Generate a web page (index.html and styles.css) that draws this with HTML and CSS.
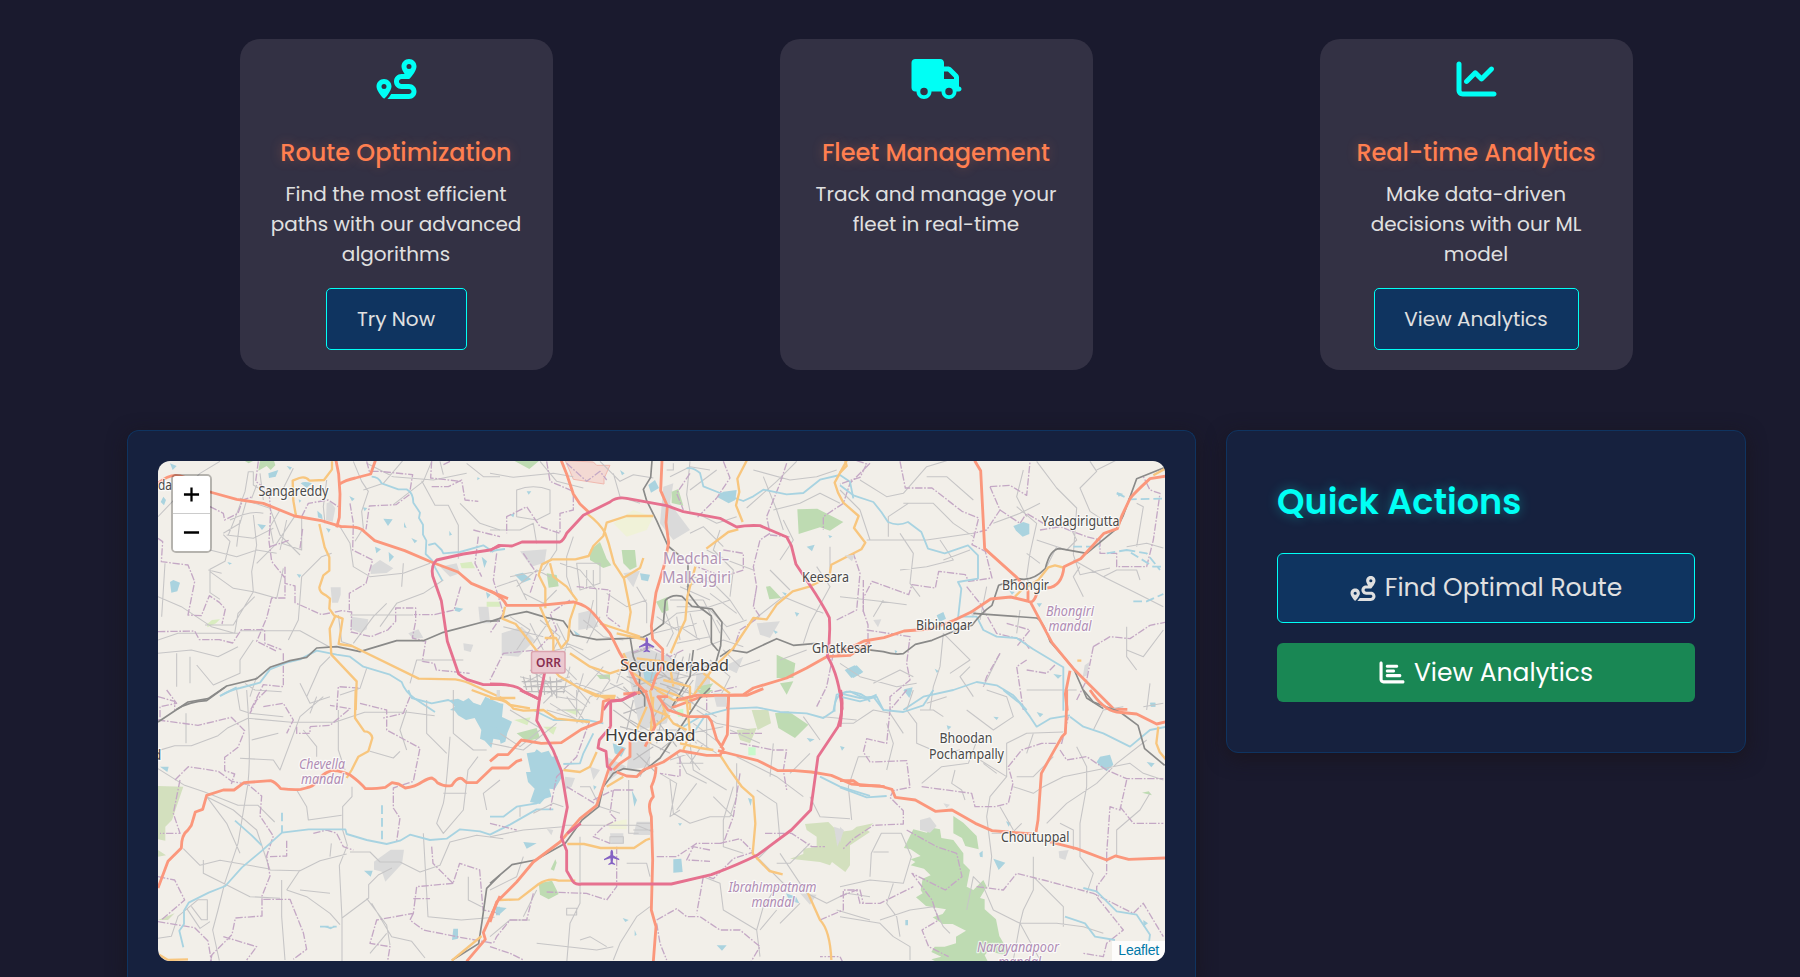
FILE: index.html
```html
<!DOCTYPE html>
<html lang="en">
<head>
<meta charset="utf-8">
<title>Route Optimization</title>
<link rel="stylesheet" href="styles.css">
</head>
<body>
<svg width="0" height="0" class="sprite">
  <symbol id="route" viewBox="0 0 512 512"><path d="M512 96c0 50.2-59.1 125.1-84.6 155c-3.8 4.4-9.4 6.1-14.5 5L320 256c-17.7 0-32 14.3-32 32s14.3 32 32 32l96 0c53 0 96 43 96 96s-43 96-96 96l-276.4 0c8.7-9.9 19.3-22.6 30-36.8c6.3-8.4 12.8-17.6 19-27.2L416 448c17.7 0 32-14.3 32-32s-14.3-32-32-32l-96 0c-53 0-96-43-96-96s43-96 96-96l39.8 0c-21-31.5-39.8-67.7-39.8-96c0-53 43-96 96-96s96 43 96 96zM117.1 489.1c-3.8 4.3-7.2 8.1-10.1 11.3l-1.8 2-.2-.2c-6 4.6-14.6 4-20-1.8C59.8 473 0 402.5 0 352c0-53 43-96 96-96s96 43 96 96c0 30-21.1 67-43.5 97.9c-10.7 14.7-21.7 28-30.8 38.5l-.6 .7zM128 352a32 32 0 1 0 -64 0 32 32 0 1 0 64 0zM416 128a32 32 0 1 0 0-64 32 32 0 1 0 0 64z"/></symbol>
  <symbol id="truck" viewBox="0 0 640 512"><path d="M48 0C21.5 0 0 21.5 0 48L0 368c0 26.5 21.5 48 48 48l16 0c0 53 43 96 96 96s96-43 96-96l128 0c0 53 43 96 96 96s96-43 96-96l32 0c17.7 0 32-14.3 32-32s-14.3-32-32-32l0-64 0-32 0-18.7c0-17-6.7-33.3-18.7-45.3L512 114.7c-12-12-28.3-18.7-45.3-18.7L416 96l0-48c0-26.5-21.5-48-48-48L48 0zM416 160l50.7 0L544 237.3l0 18.7-128 0 0-96zM112 416a48 48 0 1 1 96 0 48 48 0 1 1 -96 0zm368-48a48 48 0 1 1 0 96 48 48 0 1 1 0-96z"/></symbol>
  <symbol id="chart-line" viewBox="0 0 512 512"><path d="M64 64c0-17.7-14.3-32-32-32S0 46.3 0 64L0 400c0 44.2 35.8 80 80 80l400 0c17.7 0 32-14.3 32-32s-14.3-32-32-32L80 416c-8.8 0-16-7.2-16-16L64 64zm406.6 86.6c12.5-12.5 12.5-32.8 0-45.3s-32.8-12.5-45.3 0L320 210.7l-57.4-57.4c-12.5-12.5-32.8-12.5-45.3 0l-112 112c-12.5 12.5-12.5 32.8 0 45.3s32.8 12.5 45.3 0L240 221.3l57.4 57.4c12.5 12.5 32.8 12.5 45.3 0l128-128z"/></symbol>
  <symbol id="chart-bar" viewBox="0 0 512 512"><path d="M32 32c17.7 0 32 14.3 32 32l0 336c0 8.8 7.2 16 16 16l400 0c17.7 0 32 14.3 32 32s-14.3 32-32 32L80 480c-44.2 0-80-35.8-80-80L0 64C0 46.3 14.3 32 32 32zm96 96c0-17.7 14.3-32 32-32l192 0c17.7 0 32 14.3 32 32s-14.3 32-32 32l-192 0c-17.7 0-32-14.3-32-32zm32 64l128 0c17.7 0 32 14.3 32 32s-14.3 32-32 32l-128 0c-17.7 0-32-14.3-32-32s14.3-32 32-32zm0 96l256 0c17.7 0 32 14.3 32 32s-14.3 32-32 32l-256 0c-17.7 0-32-14.3-32-32s14.3-32 32-32z"/></symbol>
  <symbol id="plane" viewBox="0 0 46 46"><path d="M23 0q4 3 4 8v9l19 11v4l-19-6-1 12 7 5v3l-10-3-10 3v-3l7-5-1-12-19 6v-4l19-11V8q0-5 4-8z"/></symbol>
</svg>

<main class="container">
  <section class="features">
    <article class="feature">
      <svg class="feature-icon"><use href="#route"/></svg>
      <h5 class="feature-title">Route Optimization</h5>
      <p class="feature-text">Find the most efficient<br>paths with our advanced<br>algorithms</p>
      <a class="btn btn-try">Try Now</a>
    </article>
    <article class="feature">
      <svg class="feature-icon wide"><use href="#truck"/></svg>
      <h5 class="feature-title">Fleet Management</h5>
      <p class="feature-text">Track and manage your<br>fleet in real-time</p>
    </article>
    <article class="feature">
      <svg class="feature-icon"><use href="#chart-line"/></svg>
      <h5 class="feature-title">Real-time Analytics</h5>
      <p class="feature-text">Make data-driven<br>decisions with our ML<br>model</p>
      <a class="btn btn-view">View Analytics</a>
    </article>
  </section>

  <section class="dashboard">
    <div class="panel map-panel">
      <div class="map">
        <svg class="map-canvas" viewBox="158 461 1007 500">
          <!-- north-west -->
          <g transform="translate(120 420) scale(.33333)">
            <path class="green" d="M420 122l-5 30 25-14 12 12 14-14-4-14zM373 122h28l-15 8z"/>
            <path class="urban" d="M620 250l12-5 14 20-8 40-20-4zM632 502h30v22l-8 24h-18zM695 590l50 8-5 30-20 10-28-12zM752 440l28-20 40 25-20 14-48 3zM960 440l50-10 10 30-30 10zM865 640l30-12 15 25-30 4zM1030 670l30 4-8 22-20-5zM1075 560h30l5 50h-30z"/>
            <path class="park" d="M262 612l14-12 24-2-12 12-26 12zM1100 545h40v15h-40zM1020 430l35-5 10 20h-40z"/>
            <path class="water" d="M150 130l20 8-12 12zM445 160l30-10-8 20-20 4zM500 138l16 4-6 8zM542 190q10-8 34 0l-16 14zM130 230l8 10-6 16-10-10zM412 312l26 4-12 14zM150 486l10-6 20 8-8 26-18 4zM530 462l14 2-6 10zM322 426l14 4-8 4zM592 272l14 12 2 14-14-6zM618 324l14 4-6 10zM790 296l28 2-14 20zM852 306l8 18-8-2zM688 228l16 8-8 8zM728 262l14 2-8 10zM874 354l18 8-8 8zM765 380l18 8-14 12zM806 396l16 14-14 16zM988 332l8 12-8 3zM1006 562l24 4-12 10-14-4zM1072 172l8 3-8 6zM536 238l8 4-6 6zM1085 410l16 14-8 20zM1098 516l14 8-10 12z"/>
            <path class="minor" d="M114 290L200 200 240 160 300 124M200 200L160 230M385 155h15v40l35 20 55-10 30-60M385 155l-10 60-30 80-20 50M410 195l-15 40M330 300q60-30 100-20M310 344l20 20-15 60-45 24v70l30 20M270 390l80 20 60-20 60 10M380 240l-20 70-50 30M360 235l90 30 30 80 60 60M410 430l60-60 60-90M400 515l-60 100-85 0M270 455l70 50 60 10-5-60 15-80-10-90M400 515l70 20 20-90M305 460l-40-10M114 530l70 30 90 60 70 20 10-60 50-50M125 590l10-160M360 632h180l90 50M545 470l60-60 30-10M545 470l-10 130-30 60M700 124l25 60 20 30-20 60 5 50-25 40M620 180l-10 80 5 50M660 320l30 50 10 70 50 30 100-10 80-30M935 124l-25 60-90 70M905 182l40 74 40 0 30 60v100M730 210l60-20 60-70M740 130l80 40 120 10 100-20M1020 250l60 60 60 20M780 620l50-70 80-30 60-40M850 430l-5 70M690 585h190M655 585l10 80 30 10M700 670l60-80 40-40M114 700l100-10 80 20 60-30M114 660l60-20 120 0 60 0M230 735l50 60 80-35 0-40 40-60M170 800v-100M210 790v-80M375 790l30 20 80 5M410 770l-20 60M540 790l30 60 60-20M560 830l40-90 30-30M740 745l-20 60-60 20M870 790l20-70 140 0M480 270l-30 50 10 50M500 300l-20 90M545 290v100l-60-20M320 345l80 10 60-30M360 300l-10 80M430 240l-10-80M1040 130l50 40 50 0M960 124l10 40"/>
            <path class="boundary" d="M415 124l-8 60 40 30 5 60-5 90 8 60 40 50 0 60-40 0-15 60-30 70 60 30M270 260l40 20 4 20 40-20 14-40 30-10M450 380l60-20M545 290l20-40 60-10 30 20M540 385l8-60M114 355l14 10-4 60 80 10 20 50-20 100 40 2 24-60 30 20 18 20-10 45M114 635l110-2 14 26 60 0 40 10 26-40 70 0 0 40 50 20M495 440v50l30 8v50l80 36 60-12 30 4-2 60 60 14 50-20 24-26v-40h60v40l-10 50 40 10-10 60 36 6 6 20 100 10M690 250l10 60-2 80 60 30-20 70-50 30 0 50M740 124l8 30 30 0 100 10-10 60-40 30-80 4-10 70M935 124l-3 50 90 10M935 200l50 0 40-20 10 60 40 4M1075 350l-10 80 20 40M1022 500l-20 70-60 14-60 0M490 700v100l-60-6-10 20-30 60M650 870l5-70 60 4M114 830l50 14 0 26M1060 330l80 20M990 124l-20 10"/>
            <path class="river" d="M755 170q20 0 30 20l50 18h25q20 10 20 40l20 30-3 16 12 20v30l10 18-2 40 20 20 8 20 22 40M925 375l20-5 20 20 5 10 50-4 70-20 30 20M300 828q30-18 60-24l60-16 30-40 50-20 40-10 50-26 60 12 40 6 40 30 80 24 35 22q10 30 40 50l60 40"/>
            <path class="rail" d="M170 868q40-24 90-26l60-44 90-22 40-34 60-20 50-10 30-28 60-4 70 15 50-15 60-18h80l60-25 130-34 40 0"/>
            <path class="secondary" d="M636 124v24l-24 32-44 2q-10-14-30-8l-20 8 2 60 8 46M598 312l16 70 14 30v40l-18 14-12 36q0 16 20 24l12 10-2 30 14 20 26 10-12 76 40 6 200 98 110 2q30 4 60 20l80 36h40M645 590l-16 36 5 78 76 80-3 86"/>
            <path class="trunk" d="M114 190q40-36 80-18l76 44 80 22 80 12 94 38 80 14 60 18q60-2 70 16l30 26 90 30 80 34 80 30 40 34 110 46M648 122l8 40 4 60-2 70-8 30M656 194q20-14 50-20l46-12 14-40"/>
            <path class="motorway" d="M1140 378l-30 12-80 12-80 18q-18 16-12 48l26 74 18 122 34 98q10 8 24 16l50 16h50"/>
          </g>
          <!-- north centre -->
          <g transform="translate(490 420) scale(.33333)">
            <path class="urban" d="M90 394l80-6-6 40-40 12zM35 640l60-20 40 40-50 50-50-4zM265 580l40-10 20 50-60 10zM520 200l30-10-10 60 60 80-50 30-40-50zM800 610l70-6-30 50-30-10zM700 740l60-30-20 50zM620 760l40 0 0 50-50 20zM400 460l50-8-20 50zM400 700l60-20 100 40 10 90-60 60h-70z"/>
            <path class="farm" d="M370 310l60-40 60 20-20 40-60 20z"/>
            <path class="green" d="M72 122h76l-30 25zM545 215l20-8 15 50-35-8zM922 268l60-2 78 40-40 26-30-10-64 20zM300 390l30-24 20 50 14 20-24 8-40-24zM395 390l40 0 5 50-20 10-20-20zM828 500l12-2 34 36-36 4zM498 545l34-14 4 40-20 8zM170 460l30 5 6 34-30 4zM860 704l56 26-6 44-50 0zM870 790l40-6-20 40zM620 800l50-10-20 30zM320 765l40-2v14h-30z"/>
            <path class="military" d="M226 122l84 4 10 10 40 0-18 40 0 16-92-14z"/>
            <path class="water" d="M475 195l20-15 12 24-24 14zM680 230l20-15 40-5-4 30-20 10zM74 464l24-6 26 20-26 10zM950 380l24-6-8 20zM110 214h14l-8 10zM60 284l14-4-4 12zM390 150l14 10-8 6zM450 460l30 4-6 20-20-4zM914 576l14 4-8 10zM1064 750l30-14 20 24-30 14zM850 630l14 6-8 6zM460 755l40-10-4 36-30 10zM0 845l20 10 10 30H0zM250 630l20 14-10 6zM1015 345l12 4-8 6zM876 516l14 4-4 8z"/>
            <path class="minor" d="M0 160l70 12 120-12 60 10M80 210q50-20 100 0v70l-40 20-60-10zM0 330h90l40-20 10 60M150 124l50 60 80 20M370 160l20 70 60 20M330 124l60 60 40-20 60 10M530 150h20v-20M540 170l60-30 60 10M600 210l80-60M600 124l-10 100 10 50M620 280l60 30 60-20M790 150l110 30 80-10 60-20M820 170l40 100 20 60M850 270l80-20 60-30 60 30M920 124l-60 60-90 80M940 480l80-20 0-80M980 440l40 60-60 110-20 60M790 600l90-70 120 50M880 300l30 60-40 60M870 720l80-30M840 450l60 60M700 380l-60-60-40 20M690 330l-20 60 60 60-10 80M650 390l60 30 80 30M200 330v60l-40 60-100 20M250 350l-20 60 0 60 20 60M210 430l60 20 50 60v80M260 430h70v60l-60 20zM290 450v50M310 450v50M350 520l60 40 60-20M80 500l60-50 40 20M20 500l60-20 30 60M100 520l60 30 40-40M60 590l60 40-40 60M150 600l60 50-20 40M120 610l40 80M180 600l-50 70M200 610l30 60 50 20M40 620l120 30M160 700l80-20 60 40 60-30M240 640l-20 70M280 600l60 50 60 10M310 540l-20 90M330 590l-40 80M440 500l30 50 0 60M500 590l60 40 60-20M510 620l50-40 80-10M520 560l30 80-20 40M490 640l80-20 60 40M560 590l10 70M600 580l20 70M630 570l90-30 40 60M650 560l60 60 60-20M640 540l50 100M660 520l80 60M680 600l40 60M620 690l80-30 60 20M530 700l40 50 60-20M520 750l80 20 60-40M540 780l100-20M560 790l60 40M660 720l60 50-30 60M700 690l50 50 60-20M120 750l60 40 60-20M90 770l80 20 30 40 60 10M100 790l80-40M110 800l120-20M170 820l90-30 80 30M240 740l-20 80M280 760l-20 70M300 740l60 40-40 60M200 720l60 60M340 740l-60 70M360 790l60 30M380 760l60 40M400 730l-20 60M540 540h100M560 560h90M610 470l60 20 50 50M570 500l90 40M590 500l70-30M240 780l60 70M210 800l80 60M300 830l100-40M640 600l30 80M560 670l100-20"/>
            <path class="minor dark" d="M100 770l10 40M120 765l6 50M140 760l6 60M160 765l4 60M180 770l6 60M200 775v60M95 785h120M100 800h130M105 815h120M500 760l80 30M510 790l90 30M430 700l60-20M420 730l90-10M470 790l60 40M560 700l-20 50M580 710l-20 70M600 700l-10 60M450 830l80 20M410 770l90 20M430 800l90-30M500 700l-20 90M400 800l60 60M530 800l80 50M480 720l60 60M610 780l-60 80"/>
            <path class="boundary" d="M170 124l10 60 70 30 0 56-40 10 0 60-60-20-40-60-60 30 0 50M230 130l60 54 40-30 20 26M890 130l-20 60-40 100 10 50-30 20-20 80 10 60-10 60M1140 130l-60 60-20 60-60 40 0 40M700 124l20 50-40 60-60 60M600 160l-40 60 20 50M840 345l60 6M700 390l60 10 0 50-60 20-80-30M800 500l-10 60 20 30-60 40-20 60M580 690l-40 20-60-30-60 20M260 500l100 10-10 80 40 30M20 400l-10 80 30 100-40 60M100 400l40 60-20 60M1040 600l60-30 10-110-20-60M1030 700l-20 100-30 60M240 540l-60 40 20 50-60 60-100 10-40 80M650 870v-50l90-20M1120 480v100"/>
            <path class="river" d="M590 145q20-4 40 14l10 40 50 20 30 10 40 14 30-14 30-20 70 14 50-4 50-40 60-14 30 20 10 50M0 395q20-6 45-8M1140 845q-20-30-70-30-40 10-36 60"/>
            <path class="rail" d="M0 605l60-20 50-10 60 18 50 10 30 42 70 14 90-4 50-4 20-10 40-30 6-70q20-20 50-12l30 30 60 8 30 40-4 70-14 50-30 14M486 122l-4 50-22 36 10 34 30 60 34 76 60 50v90l30 40 40 30v80l20 24M690 710l30-20 50 8 90-42 50 20 70-6M420 650l10 60 20 50-4 60 20 50M610 690l-10 80-60 100"/>
            <path class="secondary" d="M770 122l-28 54 6 40-10 40 20 50M745 328l-30 8-66 50M1070 122l-36 66 10 30 16 30 46 40-14 36 34 44-12 20-90 46-6 36-60 30-50 14-48 40-30 44-40-4-60 90-60 60-80 110M290 280q40 30 56 60l10 30 16 60 30 46 20 100-10 60M490 288l-80 0-60 20-10 40-30 30-14 30-40 10-70 0-30 15-10 32 20 40v60M180 430l10 40 40 30 30 40-20 60-6 60-20 24-16-30-34 0M400 474l50-30 10-30M616 440l-24 90-6 70-14 30-30 70M380 640l90 20M330 610l60 20 60 20M45 560l-8 36 40 16 60 76 70 80 50 30 60 30h60M150 560l40 90 0 50M240 700l60 40 60 20 60-20M440 715l80 10 60 20M400 700l30 60 60 40 80 30M540 740l10 60M640 760l80 60M600 870v-70l-80-20M0 835q40-5 60 20l60 10"/>
            <path class="trunk" d="M214 122l16 40 20 60 20 30 28 26M516 122l-4 90 20 46-4 50 8 60-14 70-24 80-14 100 4 40 30 30 0 50-20 30-20 60M0 512q40 20 50 44l100 0 100-10q40 10 60 34l50 60 30 60 30 50 20 40 60 60M1140 666l-60 40-70 4-60 34-60 30-100 30-30 20-120 4-80 30-40 14M716 826l-4 44M400 822l70-6 10 40"/>
            <path class="motorway" d="M0 392l26-16 40 2 30-12h114q10-4 20-26l50-54 80-40q20-16 50-11l120 22 50 18 110 20 50 26q30-6 70-4l80 34 14 26 14 56 40 60q40 60 60 100 4 60-6 116 36 60 44 160M0 792q80 0 100 22l48 24 16-80M340 870l20-28 36-2 40-22"/>
          </g>
          <!-- north-east -->
          <g transform="translate(840 420) scale(.33333)">
            <path class="water" d="M520 318l30-12 18 6v30l-20 8-20-18zM290 586l20-10 8 20-20 10zM830 216l20 6-14 8zM20 750l30-14 20 20-30 18zM590 550h16l-8 12zM640 762l26 4-12 10zM192 808l26-6-8 30zM284 746l14 8-8 4zM932 848h14v12h-12zM164 690l8 4-6 8zM508 512l16 4-8 8z"/>
            <path class="urban" d="M100 600l24-2-10 24zM14 406h30l-8 18zM734 736l14-10-6 40-14 6zM390 570l20 4-12 20z"/>
            <path class="minor" d="M60 180l80 50 50-10 70-80 60-18M190 250l90 0 60 60 60 40M145 350v-60l60-40M0 210l60 60 30 90M80 360h180l140-20M300 360l40 60-80 20-80 10M310 420l80-30M260 170h60l80 70M180 340l40 60-10 90 30 40M0 530l120 14 80 10M130 540l-30 50M590 124l60 80 60 60-10 140 20 60 90-20M550 150l-20 80 30 60M530 260l60 50-20 90-10 70 10 30M460 310l80-30 60-30M590 360l90 30 30-30-30-60M750 124l20 30-50 50 30 70 60 40M770 150l60-30M860 380l60-10 50 14M890 250l20 10-20 120M700 420l90 50 100 50 80 40M720 440l-20 30 30 60M790 470l40-20 60 0 10 30M310 640l-10 100-20 60-10 70M310 640l80 80-60 40M390 740l-30 30 40 60M480 700l-50 100M860 620l0 90 30 40M860 690l50 20 60-80M930 790l-10 80M560 810h90l60 0M0 730l60 40 110 30 60-10M100 790l80-40 40 20M440 500l-20 100M540 570l-10 70M650 380l-30 60M600 430l-40-30"/>
            <path class="boundary" d="M50 122l30 10-20 40-60 20M180 124l16 80 80 0 90 70 50 20-20 80 40 20 20 80-70 10-10-20-80-10-10 50-70-10-10 30-110-40-26 50 0 40 14 40v70M450 200l60-4 50 30 10-100M450 200l30 70-40 60-40 10M480 270l60 40 20-30 50 30M600 330l60-10 80 30 40 10v40l50 0 0 40 90 0 20-80 20-140-30-10-20-40M380 500l40 50 50 90 80 20 20 30M500 610l70 20-40 50M80 630l130 20-10 80 10 50-60 50 0 40M480 700l-40 70-10 30M560 720l-30 20 20 130M560 750l60 10 30-30M760 680l-20 100-30 60M760 680l50-30 60 6 60-40 50-10"/>
            <path class="river" d="M0 196l40 30 60 20 24 30 20 30q30 14 60 0l40 30 20 50 50 14 70-24 30 30 0 70-60 10 10 20-10 90M360 590h50l20 40 40 20 60 4 50 34 60 36 30 18v130M0 820l60 14 40-4 30 40M190 870l60-40 90-20 70-24 60 10 50 30 40 44"/>
            <path class="river dashes" d="M700 380l80 0M800 400l60-10 80 50 30 0M880 544h40l50-22M830 220l40 18 100-2M860 390l60 10 40 50"/>
            <path class="rail" d="M980 140l-90 36-40 110-20 40-90 74-80-14q-30 0-44 60-40 40-80 30l-60 20-20 60q-30 20-60 60l-60 20-60 25-50 12-36 28q-30 4-60-6l-80-10M400 580l190 14q20 10 40 70l70 80 40 90 50 32"/>
            <path class="secondary" d="M940 166l40-22M0 158l20-20-4-16M525 530l20-20 50-30 30-38 20-6 30 8M712 722h12"/>
            <path class="trunk" d="M404 122l18 30 12 234 96 86 34 40v30M980 168l-50 8q-50 46-60 60l-24 50-14 40-40 14-70 76-50 24q-6 60-50 64M592 515q-10 40-30 28l-50-12-60 6-60 40-50 24-70 26-80 6-60 20-60 10-80 40M572 548l64 120 66 80 90 90 30 30h40M690 752l-14 70 6 50"/>
          </g>
          <!-- south-west -->
          <g transform="translate(120 690) scale(.33333)">
            <path class="farmgreen" d="M114 288l76 2-34 100-20 20 0 42-22-4zM114 480l24 16-24 4zM114 690l50-20-20 20z"/>
            <path class="urban" d="M762 515l50-36h40l-6 42-50 54-10-30-24-6zM1130 0h10v20h-10z"/>
            <path class="water" d="M120 230h26l-4 16zM990 30l24-4 16 8 16-10 14 14 22 8 14-26 44 20v110l-20-4-6 28-20-22-14-6 4-26-20-36-26 6-24-14-10-14-14-2 14-10zM732 542h26l-6 18zM612 710h34l-14 8zM1000 716l14 0v30l-18 4zM1128 650l12 0v26l-12 0z"/>
            <path class="minor" d="M114 182l50-15h50l80-30 30-24 60-28 130 12h130l90-30h130l80 10M198 70v90M380 0q14 180 4 280l-30 180-40 120-20 80-16 60 20 92M350 0l10 60 30 10 100 10M395 150l80-20M360 205l100 5 20 30 60-160 70-60M550 120l40 50 0 30M570 70l20-50M655 60v120l20 60M114 236l80 50 60 20 100 40 60 0 50 50M260 320l80 40 70 60 40 120 90 2 60-30 80-20M260 320l60 80 40 90M190 476l50 50 60-15 145 25M250 510l0 40 60 30 80 40 90 5M530 300l30 50 5 40 100-14M696 290v30l-28 30v70l14 46-24 60 8 160v130M666 684l80-60v-40l30-30 40-20M690 486h60l30 30 60 0 60 30 60-20 30-70 80-20 80 10M740 625l60 80 10 60M755 640l60 100 60 14 40 50M500 600l60 20 70 50 30 34M500 600l40-60M540 600l90 10M485 570l0 110 10 130M990 140q-10 150-20 200l-20 60 20 30 60-70 14-120 30-40M860 60l-20 60 20 60M920 30l0 100 60 60M1000 0v130l60 50 40 0M970 310h70M1140 270l-50 40 10 50M910 430l14 250 100 10 100-8M1045 560v70l40 20M800 730l-50 60M750 184l70 20 20-20M114 745l40-6 20-60 60-50 28 0 0 60-18 0-30-40M630 500l4-40M200 655l40 60 30-20"/>
            <path class="boundary" d="M140 0l30 40-50 10 0 40M114 90l120 16 100-24 40 40-20 50-40 30 0 40 30 10-10 30M165 270l40-40 90 14 40 30 50 10 40 34-5 60 40 60-20 60 10 60-24 60v60l-80 6-10 50-60 60-16 68M440 0l-30 30-20 40M430 50l60-10 30 50-20 40M530 110v20h40v-20M570 110l60-4 60-50-60-10M720 40l80 20 0 60 100 54-20 100-60 20 0 60 20 30-10 70M870 20l-20 50-60 14M450 500l50-2 0-50M580 430l40-10 30 10 20 40 30 10M180 270l-20 100 20 60-60 0M114 560l50 10 30 60-70 60M114 695l110 18 40 40 10 60M310 740l100 30-30 40M430 628l80 0 40 100 10 50-40 30M935 470l4 50 60 60 20-60 60 20 10 120 50 10M1000 580l-110 10-10 80-110 20-20 70 60 10-10 60M880 670l-10 20 40 30 100 20 110 20M880 626h50"/>
            <path class="river" d="M190 772l-12-50 14-20v-40l14-24 60-30 50-20 50-56 60-50 60-54 80-10h110l4 14 60 18 60 12 40-10 30-18 60 16 50-4 40-28 60 6 30 10 60-30 80-46h50M345 392l50 44 30 30M300 18l50-26M865 0l10 24 60 16 50-10 20 10"/>
            <path class="river dashes" d="M486 368v60M786 346v110M600 710h50"/>
            <path class="rail" d="M114 96l90-60 60-10 50-34M1140 555l-40 40-14 100-10 66-80 50"/>
            <path class="secondary" d="M707 0l-2 84 28 40q20 0 24 20l-12 40-30 16-20 40-15 24M114 792l30 18 60-2M1055 0l70 26h20M995 812l90-74"/>
            <path class="trunk" d="M114 594l30-80 40-40q0-40 20-54l10-14 12-40 22-8 12-42 50-16h32l30-22 80-6q14 4 30 24 40 4 60 2 30-6 40-14 20-30 50-42 30-2 60 14 30 22 44 40 40 0 60-4l20-14 20 4 20 12q30-4 50-18 20-12 30-12 12 6 16 14 24 14 44 8 16-26 30-20l14 12h30l46-44h50l24-20 16-5M1040 814l56-66-6-20 50-110"/>
          </g>
          <!-- south centre -->
          <g transform="translate(490 690) scale(.33333)">
            <path class="farmgreen" d="M785 60h50l8 40-40 20zM740 120l60-6-20 46-30-10zM945 402l70-6 30 30 80-10 15 10-60 40 0 60-14 20-40-30-6 10-30-10-90-10 40-14 0-16 40-6 0-30-30-20z"/>
            <path class="green" d="M855 70l40-6 60 40-40 40-50-30zM146 580l40-8 20 40-30 16-26-14zM182 538l14-30 4 10-8 24zM80 130l60-16 10 30-40 10zM620 0h50l-30 20z"/>
            <path class="farm" d="M350 400l60-12v30l-50-2z"/>
            <path class="parkbright" d="M775 172h22v24h-22zM560 60l20-4v24h-16z"/>
            <path class="park" d="M72 90l50-8-10 24zM160 110l40 0-10 24zM220 60l50-4-10 20z"/>
            <path class="urban" d="M225 260l30 4-10 26-20 10zM300 230l30 10-20 30zM440 395l40 0v40h-50zM170 416l20 4-6 16zM1032 410l30 10-20 50zM360 430h40v30h-36zM420 150h60v80l-70 10zM350 200l60 30-50 40zM930 610l50 4-20 30zM670 10h40v40h-30zM430 20l60-20 60 30-20 70-80 20z"/>
            <path class="water" d="M0 35l40 6-4 40 30 14-14 34-6 26-14 6-10-46-22-6zM110 190l24-4 6-8 14 10 22-6 10 18 16-2 16 60-24 40-16-2 6 24-20 6-14 16-30-6 14-40-20-20-6-30 14 0zM550 508l24-2 4 40-28 2zM100 456l40 4-30 16zM310 286l10 4-8 10zM368 160l40 14-14 26-20-10zM425 300l16 30-8 20zM950 144l24 4-14 8zM774 324l12 4-4 20zM564 400h12l-6 8zM20 650l30 4-20 18-14-4zM398 684l18 6-10 6zM680 766h30l-14 16zM888 610l30 10 10 20-30-8zM434 720l6 14-6 4z"/>
            <path class="minor" d="M0 440l100-20 120-10M270 290h30l30 60 60 20M220 406h220l50 20M360 440h40v20h-40zM416 270v160h30M270 440l0 200-30 60-10 120M0 600l80-40 20-60M100 680l40-80M230 655h30v20h-30zM140 760l180 20 50-10M270 750l30-10 50 30M480 650l-40 30-50 80-20 50M510 250l50 30-20 100 30-20M540 270l10 100 50 30 60-20 60 0 20-60 0-100M600 160l10 80 100 60M640 160l-40 60M560 190l30 60 60 30M620 280l-60 80M730 290l-30 100 0 80 60 20M800 300l60 40 10 110M740 200l120 60 80 60M850 160l-10 100M640 560l50 20 10 80 100 60 10 80M640 560l-80 20M730 380l-60-60M860 450l-60 60M870 490l80 120 60 30 60-30 70 10M800 500l100 100M1040 660l100 30M860 660l-50 60M860 590l-40 60-20 70M930 640l-60 60M960 320l30 60 90 6M1085 390l-10-100 30-90 35 0M1000 80l100 10M990 150l-50-70M900 250l60-60M620 60l60 40 100 20M610 100l80 60M650 80l0 100M600 130l100-20M720 120l90 40M590 30l90 50M560 100l60 60M30 130l60 40 60-50M0 160l100 20 100-80M60 60l100 60M0 740l60-50 60 0M130 370l60-30 30 10M90 380v-30M410 520h60l10 40M440 400h40M430 420h60M860 520l40 0 60-60M500 120l60 0M180 40l100 60M200 60l80 0M230 20l60 80M170 60l100 30M260 0v80M300 20l-40 80M200 0l-40 40M580 180l50 60M560 220l80 0M540 210l60-20M620 150l60 40M480 200l-30 60"/>
            <path class="minor dark" d="M380 20l60 50M400 70l60-20M370 60l70 50M390 110l80 20M420 90l70 40M430 30l-20 90M500 90l60 80M500 20l80 60M520 60l-20 100M540 0l-60 100M510 180l50-40M480 160l60 30M440 190l60 60M430 210l60-40"/>
            <path class="boundary" d="M300 90l-40 110-60 60-20 100M370 300l-10 70 20 20-40 20-30 30 50 20M230 290l100 60M430 300l-60 0-60 30M750 160l100 20 40 0-10 60 10 60M750 250l-20 130-30 80-80 0-60 40-60 0M825 430l80 0 60 40 40 0M720 130h100M570 200v60l-60-10M380 470v120l-30 40-60-20-120-4M130 610l-20 80-50 0-40 50-10 20M500 690l60-34 30 24 40 0 60 40 60 0 60 50-30 50M640 560l-20 110M690 460l60-14 40 40-60 20-60 60-30-10M660 480l-50-10-20 40 70 4M500 700l10 60 20 50M0 770l60 20 40 20M990 690l70-30 0-60 50 0 10 40M1060 820l-10-20-60 0M0 400l80 20"/>
            <path class="river" d="M0 380l40 0 40-30 60-10 40-30M310 130l-30 60-10 30-50 2M130 60l60 30 100 0 50 10M580 110l50-30 90-24 80-4 70 14 80 4 50 14 30-20 10-50 40-10 50 24 30-14M990 260l60 30 90 28M610 130l40-60"/>
            <path class="rail" d="M0 580l66-56 70-14 90-50 50-70 50-40 14-60 30-40 30-14 60 8 50-40 60-90 60-90 30-30M450 0l14 20 0 30"/>
            <path class="secondary" d="M0 26q50 0 70 30l30 6 60-2 40 26 100 10M220 240l50 6 30-16 20-44M350 290l50-30M285 0l60 24 30 0M480 0l10 60 50 20M500 0l50 30 40 0 10 100-20 50M440 120l30-70M520 60l30 40 40 20M570 160l60 14 40 6M690 195l26 40 40 56 34 30 6 80-8 90 50 52 40 10M954 610l36 80q30 30 34 120M232 462h50l50 12 100 0 36-24 12-4M30 630l56-2 60-46q30-20 60-10h50M490 20l-10 140M510 20l20 60-50 40"/>
            <path class="trunk" d="M0 214l24-20 30 0 40-44 60 10 60-2 60-40 60-24 6-60 20-6M0 696l20-60 60-60 50-60 80-60 60-70 50-40 20-60 20-60 40-50M380 246l30 12 30 2 20-20 60-24 50-34 80 14h40l10-18-20-30-16-54-10-14h-60l-60-20-30-40 30 0M716 14l-4 120-20 40M684 182l40 10 80 20 60 30 50 0 50 4 60 10 60 26 100 8M465 0l20 60 10 50-30 60M498 230q0 30-14 60l6 30q-20 20-6 60l4 130-4 150 14 50-8 104M560 30l60-14h150l50-20M420 150v50l-30 20-20 20"/>
            <path class="motorway" d="M90 0l58 28 4-28M148 28l-8 64 50 90 24 60 18 110-10 50-8 40 16 40v60l14 24q8 20 30 16h270l120-28q80-30 140-60l100-74 58-60 22-160 60-90q20-60 8-110M362 110v-76l34-4 44-20M362 110l-34 40-4 24 24 10 4 46 14 10M232 430l40-30"/>
          </g>
          <!-- south-east -->
          <g transform="translate(840 690) scale(.33333)">
            <path class="green" d="M340 378l30 20 40 40 6 40-40-10-10-24-26-14zM220 418l40 10 20-14 20 4 4 26 36 6 30 40 0 30 20 20-10 50 20 10 30-30 10 20-20 34-10 30 10-30 14 4 0 30 34 30 10 50 26 44-10 12-50-10-10 12 20 40 30 20 20 34h-100l-20-20-40-20-20 4-20-16 20-6-50-24 30-8-30-14 10-16 30 0 34-10 0-20 30-18-40-20-30 0-30-20 30-10 10-14-60-10-30-26 20-12-6-10 6-34 24-10-20-20-40-10 14-10-14-8 30-10-30-20-20-4z"/>
            <path class="green" d="M906 308l20-4 10 12z"/>
            <path class="farmgreen" d="M0 450l50-40 50-10-30 30-60 30z"/>
            <path class="urban" d="M240 390l30-8 20 26-20 20-30-8zM656 484l30-4-10 30-18-6zM0 410l10 10-10 40zM310 340l20 4-10 10z"/>
            <path class="water" d="M770 216l10-16 30-6 10 30-20 20-20-16zM460 506l36 12-20 22zM498 394l14 4-6 12zM418 490l10-8v20l-8-2zM590 66l20 6-10 10zM910 690l14 10-14 10zM920 216l24 4-10 12zM460 80l16 2-6 8zM320 106l14 4-10 10zM190 0h26l-8 24zM0 168l14 4-8 10zM196 690h8v16h-8zM930 38h16v12h-14z"/>
            <path class="minor" d="M0 100h40l60-40 50 10 40 60M220 0l-20 60 30 40 0 60 70 30 60-10M240 60h40l30 20M320 20l-60 20M380 60l80 60 60-40-20-60-60-20M345 240l-10 40 30 20 10 30M140 100l20 60-20 80M245 280l60-50 80-10 30-80M420 210l80 50 0-100 60-30 110-4M430 220l40 30M500 260l-50 60-10 60 15 120-10 90M520 290l60 20 30-20 60-30 200-40 40 30 60 20M620 400l60-60 90-60 60-60 90-70M740 290l-20 110 0 100 40 50-20 60M710 170l30 60 0 60M580 130l-20 60M0 590l90-20 100 10 24-80-30-70-60 0-30 60-4 70M100 486h46M0 680l120 20 40 40 50 30v40M120 690l90-30 70-10 30 60 20 20M160 580l-20 60 30 40 10 60M380 660l20-100 30 30 30 70 80 40h110l80 10 60 20M580 560l90 90v60M580 500v100l-30 60-10 40-20 110M540 700l60 110M545 400l-30 30-60 0M830 500l0-80 70-60 30-50M640 200l-60 60-50 0M760 120l30-60 60-10M910 50l60-10M480 350l40 70M660 400l40 20 0 60"/>
            <path class="boundary" d="M200 0l-50 60-10 100-60-14-10 40 20 30 110-4 10 80-50 10-10 20 40 40 0 40-90 4-60 40-30 30M245 290l150 20 10 40 60 0 40-10 14-60-14-50 40-50 60-20 60 0 20-80M660 180l20 30 60-10 60 40 60 26h110M860 270l-20 90-30-10-10 140 0 60-30 40 0 30 80 100-50 40-10 40-60-10M840 350l40 50 90 0M200 420l90 50 60 20 16 70-50 40-100-50 60 80 20 60-50 30 20 50 60 30M410 590l80 10 40-50 80 20 150 40 120 60 30-30 60 100M0 620l50-20 10 40 60 0 100-50"/>
            <path class="river" d="M0 20l60 14 50-14 20 40 60 6 60-20 30-46M490 0l50 40 30 40 20 30 40-24 60-10M690 80l40 30 60 20 80 40 60-50 50-10M0 292l80 30 60-4M730 594l40 10 60 60 60 10 40 60-4 30M675 680l60 20 30 40 60 10"/>
            <path class="rail" d="M730 0l30 36 80 30 54 40 20 70 60 50"/>
            <path class="secondary" d="M955 110l-6 50 10 26 20 24"/>
            <path class="trunk" d="M680 0l0 50-4 80-10 10-34 60-28 50-10 140-6 36M750 0q40 60 80 66l60 6 60 30 26-6M0 272h40l20 14 60 2 36 10 10 24 60 8 60 34 50-4 70 40 50 22 50 4 70 6M630 456l80 20 90 34 26-12 40 10 110-4"/>
            <path class="motorway" d="M0 0q10 50 0 110"/>
          </g>
          <g class="orr"><rect x="531.500" y="651.500" width="33.500" height="21.500" rx="2"/><text x="536" y="667" textLength="25" lengthAdjust="spacingAndGlyphs">ORR</text></g>
          <g class="plane"><use href="#plane" x="639" y="637" width="15.500" height="15.500"/><use href="#plane" x="604" y="849.500" width="15.500" height="15.500"/></g>
          <g class="town">
            <text x="258.500" y="495.500" textLength="70" lengthAdjust="spacingAndGlyphs">Sangareddy</text>
            <text x="158" y="490" textLength="14" lengthAdjust="spacingAndGlyphs">da</text>
            <text x="802" y="582" textLength="47" lengthAdjust="spacingAndGlyphs">Keesara</text>
            <text x="812" y="652.500" textLength="60" lengthAdjust="spacingAndGlyphs">Ghatkesar</text>
            <text x="1041.500" y="526" textLength="78" lengthAdjust="spacingAndGlyphs">Yadagirigutta</text>
            <text x="1002" y="589.500" textLength="47" lengthAdjust="spacingAndGlyphs">Bhongir</text>
            <text x="916" y="630" textLength="56" lengthAdjust="spacingAndGlyphs">Bibinagar</text>
            <text x="939.500" y="742.500" textLength="53" lengthAdjust="spacingAndGlyphs">Bhoodan</text>
            <text x="929" y="758.500" textLength="75" lengthAdjust="spacingAndGlyphs">Pochampally</text>
            <text x="1001" y="842" textLength="68.500" lengthAdjust="spacingAndGlyphs">Choutuppal</text>
            <text x="153" y="759.500">d</text>
          </g>
          <g class="city">
            <text x="620" y="670.500" textLength="109" lengthAdjust="spacingAndGlyphs">Secunderabad</text>
            <text x="605" y="740.500" textLength="90.500" lengthAdjust="spacingAndGlyphs">Hyderabad</text>
          </g>
          <g class="district">
            <text x="663" y="564" textLength="66" lengthAdjust="spacingAndGlyphs">Medchal–</text>
            <text x="662" y="582.500" textLength="69" lengthAdjust="spacingAndGlyphs">Malkajgiri</text>
          </g>
          <g class="mandal">
            <text x="299" y="768.500" textLength="46" lengthAdjust="spacingAndGlyphs">Chevella</text>
            <text x="301" y="783.500" textLength="43" lengthAdjust="spacingAndGlyphs">mandal</text>
            <text x="1046" y="616" textLength="48" lengthAdjust="spacingAndGlyphs">Bhongiri</text>
            <text x="1048.500" y="631" textLength="43" lengthAdjust="spacingAndGlyphs">mandal</text>
            <text x="728.500" y="892" textLength="88" lengthAdjust="spacingAndGlyphs">Ibrahimpatnam</text>
            <text x="751.500" y="907" textLength="43" lengthAdjust="spacingAndGlyphs">mandal</text>
            <text x="977" y="952" textLength="82" lengthAdjust="spacingAndGlyphs">Narayanapoor</text>
            <text x="998" y="966.500" textLength="43" lengthAdjust="spacingAndGlyphs">mandal</text>
          </g>
        </svg>
        <div class="zoom-control">
          <a class="zoom-btn"><svg viewBox="0 0 18 18"><path d="M1 9h16M9 1.500v15"/></svg></a>
          <a class="zoom-btn"><svg viewBox="0 0 18 18"><path d="M1 9h16"/></svg></a>
        </div>
        <a class="attribution">Leaflet</a>
      </div>
    </div>
    <aside class="panel actions">
      <h3 class="actions-title">Quick Actions</h3>
      <a class="action primary"><svg><use href="#route"/></svg>Find Optimal Route</a>
      <a class="action success"><svg><use href="#chart-bar"/></svg>View Analytics</a>
    </aside>
  </section>
</main>
</body>
</html>
```
FILE: styles.css
```css
* { box-sizing: border-box; }
html, body { height: 977px; overflow: hidden; }
body {
  margin: 0;
  background: #1a1a2e;
  color: #e0e0e0;
  font-family: Poppins, Inter, "Open Sans", sans-serif;
}
.sprite { display: block; }
.container { width: 1620px; margin: 39px 0 0 127px; }

.features { display: grid; grid-template-columns: repeat(3, 540px); justify-items: center; margin-left: -1px; }
.feature {
  width: 313px;
  height: 331px;
  padding: 20px 0;
  border-radius: 20px;
  background: #333144;
  display: flex;
  flex-direction: column;
  align-items: center;
  text-align: center;
}
.feature-icon { width: 41px; height: 40px; fill: #00fff5; }
.feature-icon.wide { width: 51px; }
.feature-title {
  margin: 39px 0 10px;
  font-size: 24px;
  line-height: 30px;
  font-weight: 500;
  color: #ff7f50;
  white-space: nowrap;
  text-shadow: 0 0 12px rgba(255, 127, 80, .3);
}
.feature-text { margin: 1px 0 19px; height: 90px; font-size: 20px; line-height: 30px; white-space: nowrap; }
.btn {
  display: block;
  height: 62px;
  border: 1px solid #00fff5;
  border-radius: 5px;
  background: #0f3460;
  font-size: 20px;
  line-height: 61px;
  white-space: nowrap;
}
.btn-try { width: 141px; }
.btn-view { width: 205px; }

.dashboard { display: grid; grid-template-columns: 1069px 520px; column-gap: 30px; align-items: start; margin-top: 60px; }
.panel {
  border: 1px solid #0f3460;
  border-radius: 12px;
  background: #16213e;
  box-shadow: 0 5px 19px rgba(26, 20, 28, .8);
}
.map-panel { padding: 30px 30px 0; height: 547px; border-bottom: 0; border-radius: 12px 12px 0 0; }
.map { position: relative; width: 1007px; height: 500px; border-radius: 12px; overflow: hidden; background: #f2efe9; }
.map-canvas { display: block; width: 1007px; height: 500px; }
.map-canvas path { stroke-linejoin: round; }
.map-canvas .green { fill: #bedbb2; }
.map-canvas .farmgreen { fill: #d3e0be; }
.map-canvas .park { fill: #d9ecc0; }
.map-canvas .parkbright { fill: #c8facc; }
.map-canvas .farm { fill: #f0f2d8; }
.map-canvas .urban { fill: #dadada; }
.map-canvas .military { fill: #f3d9d3; stroke: #f0b8ae; stroke-width: 3; }
.map-canvas .water { fill: #aad3df; }
.minor, .boundary, .river, .rail, .secondary, .trunk, .motorway { fill: none; }
.minor { stroke: #c6c5c6; stroke-width: 3.200; }
.minor.dark { stroke: #bdbcbd; stroke-width: 3.500; }
.boundary { stroke: #c4a8c5; stroke-width: 4; stroke-dasharray: 22 5 5 5; }
.river { stroke: #a8d3e1; stroke-width: 5.500; }
.river.dashes { stroke-dasharray: 26 12; }
.rail { stroke: #8a8a89; stroke-width: 5; }
.secondary { stroke: #f8c67e; stroke-width: 7; }
.trunk { stroke: #fb977c; stroke-width: 8.500; }
.motorway { stroke: #e6718f; stroke-width: 8.500; }
.map-canvas text { font-family: "Noto Sans", sans-serif; paint-order: stroke; stroke: rgba(255, 255, 255, .7); stroke-width: 2.500px; stroke-linejoin: round; }
.town { font-size: 13.500px; fill: #4b4a49; }
.city { font-size: 17px; fill: #3d3c3b; }
.district { font-size: 15.500px; fill: #b193b4; }
.mandal { font-size: 13.500px; font-style: italic; fill: #b08cb4; }
.orr rect { fill: #ebc9d0; stroke: #dba3ae; stroke-width: 1.500; }
.map-canvas .orr text { font-size: 12.500px; font-weight: 600; fill: #8a2f50; stroke: none; }
.plane { fill: #8461c4; }

.zoom-control {
  position: absolute;
  left: 13px;
  top: 13px;
  width: 41px;
  border: 2px solid rgba(0, 0, 0, .25);
  border-radius: 5px;
  background-clip: padding-box;
  overflow: hidden;
}
.zoom-btn { display: flex; align-items: center; justify-content: center; height: 37px; background: #fff; }
.zoom-btn + .zoom-btn { height: 38px; border-top: 1px solid #ccc; }
.zoom-btn svg { width: 17px; height: 17px; fill: none; stroke: #000; stroke-width: 2.400; }
.attribution {
  position: absolute;
  right: 0;
  bottom: 0;
  height: 20px;
  padding: 0 6px;
  background: rgba(255, 255, 255, .8);
  color: #0078a8;
  font: 14px/18px "Liberation Sans", Arial, sans-serif;
  letter-spacing: -.2px;
}

.actions { height: 323px; padding: 50px; }
.actions-title {
  margin: 0;
  height: 72px;
  font-size: 35px;
  line-height: 42px;
  font-weight: 600;
  color: #00fff5;
  white-space: nowrap;
  text-shadow: 0 0 12px rgba(0, 255, 245, .35);
}
.action { display: flex; align-items: center; justify-content: center; gap: 9px; font-size: 25px; border-radius: 6px; white-space: nowrap; }
.action svg { width: 26px; height: 25px; fill: currentColor; }
.primary { height: 70px; border: 1px solid #00fff5; background: #0f3460; margin-bottom: 20px; }
.success { height: 59px; background: #198754; color: #fff; }
```
